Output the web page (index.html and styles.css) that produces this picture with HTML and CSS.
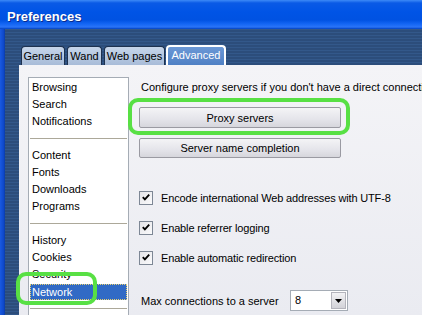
FILE: index.html
```html
<!DOCTYPE html>
<html lang="en">
<head>
    <meta charset="UTF-8">
    <meta name="viewport" content="width=device-width, initial-scale=1.0">
    <title>Preferences</title>
    <link rel="stylesheet" href="styles.css">
</head>
<body>
    <div class="window">
        <div class="titlebar">Preferences</div>
        <div class="frame">
            <div class="frame-edge"></div>
            <div class="frame-body">
                <div class="tabs">
                    <div class="tab tab-general">General</div>
                    <div class="tab tab-wand">Wand</div>
                    <div class="tab tab-web">Web pages</div>
                    <div class="tab active">Advanced</div>
                </div>
                <div class="panel">
                    <ul class="listbox">
                        <li>Browsing</li>
                        <li>Search</li>
                        <li>Notifications</li>
                        <li class="sep"></li>
                        <li>Content</li>
                        <li>Fonts</li>
                        <li>Downloads</li>
                        <li>Programs</li>
                        <li class="sep"></li>
                        <li>History</li>
                        <li>Cookies</li>
                        <li>Security</li>
                        <li class="selected">Network</li>
                        <li class="sep"></li>
                    </ul>
                    <div class="content">
                        <p class="intro">Configure proxy servers if you don't have a direct connection</p>
                        <button class="btn btn-proxy">Proxy servers</button>
                        <button class="btn">Server name completion</button>
                        <div class="checks">
                            <label class="check">
                                <span class="box">
                                    <svg width="13" height="13" viewBox="0 0 13 13"><path d="M3 6 L5.3 8.5 L10 3.5" fill="none" stroke="#000" stroke-width="2"/></svg>
                                </span>
                                Encode international Web addresses with UTF-8
                            </label>
                            <label class="check">
                                <span class="box">
                                    <svg width="13" height="13" viewBox="0 0 13 13"><path d="M3 6 L5.3 8.5 L10 3.5" fill="none" stroke="#000" stroke-width="2"/></svg>
                                </span>
                                Enable referrer logging
                            </label>
                            <label class="check">
                                <span class="box">
                                    <svg width="13" height="13" viewBox="0 0 13 13"><path d="M3 6 L5.3 8.5 L10 3.5" fill="none" stroke="#000" stroke-width="2"/></svg>
                                </span>
                                Enable automatic redirection
                            </label>
                        </div>
                        <div class="max-row">
                            <span class="max-label">Max connections to a server</span>
                            <div class="select">
                                <span class="select-value">8</span>
                                <span class="select-btn">
                                    <svg width="7" height="4" viewBox="0 0 7 4"><path d="M0 0 H7 L3.5 4 Z" fill="#000"/></svg>
                                </span>
                            </div>
                        </div>
                    </div>
                </div>
            </div>
        </div>
        <div class="highlight hl-proxy"></div>
        <div class="highlight hl-network"></div>
    </div>
</body>
</html>
```

FILE: styles.css
```css
* {
    margin: 0;
    padding: 0;
    box-sizing: border-box;
    font-family: 'Liberation Sans', Arial, sans-serif;
}

body {
    width: 422px;
    height: 315px;
    overflow: hidden;
    background: #2f5280;
}

.window {
    position: relative;
    width: 422px;
    height: 315px;
    display: flex;
    flex-direction: column;
    overflow: hidden;
}

.titlebar {
    flex-shrink: 0;
    height: 29px;
    padding: 9px 0 0 7px;
    line-height: 16px;
    font-size: 13px;
    font-weight: bold;
    color: #fff;
    text-shadow: 1px 1px 0 #0b2b8c;
    background: linear-gradient(#3d8af7 0, #0a5ae6 3px, #0054e6 12px, #0052e2 20px, #1466f4 24px, #2a74f8 27px, #0040c0 29px);
}

.frame {
    flex: 1;
    display: flex;
    min-height: 0;
}

.frame-edge {
    flex-shrink: 0;
    width: 5px;
    background: linear-gradient(90deg, #1a5ae0, #0c46c8 4px, #0a3a9c 5px);
}

.frame-body {
    flex: 1;
    min-width: 0;
    display: flex;
    flex-direction: column;
    padding-left: 14px;
    background: repeating-linear-gradient(#33588a 0, #33588a 1px, #2c4d7b 1px, #2c4d7b 3px);
}

.tabs {
    flex-shrink: 0;
    height: 36px;
    display: flex;
    align-items: flex-end;
    gap: 2px;
    padding-left: 2px;
}

.tab {
    height: 19px;
    line-height: 18px;
    text-align: center;
    white-space: nowrap;
    font-size: 11px;
    color: #000;
    background: linear-gradient(#c6d5ea, #a8bcd8);
    border: 1px solid #1e3250;
    border-bottom: none;
    border-radius: 4px 4px 0 0;
}

.tab-general {
    width: 44px;
}

.tab-wand {
    width: 35px;
}

.tab-web {
    width: 61px;
}

.tab.active {
    width: 60px;
    height: 20px;
    margin-left: -1px;
    color: #fff;
    background: linear-gradient(#6b98d6, #4f80c4);
    border: 2px solid #fff;
    border-bottom: none;
    line-height: 17px;
}

.panel {
    flex: 1;
    min-height: 0;
    display: flex;
    overflow: hidden;
    background: linear-gradient(#f4f4f7, #eaebf1);
}

.listbox {
    flex-shrink: 0;
    list-style: none;
    width: 101px;
    height: 250px;
    margin: 12px 0 0 9px;
    padding-top: 1px;
    background: #fff;
    border: 1px solid #a5acb5;
}

.listbox li {
    height: 17px;
    line-height: 17px;
    margin: 0 1px;
    padding-left: 2px;
    font-size: 11px;
    color: #000;
}

.listbox li.sep {
    position: relative;
}

.listbox li.sep::after {
    content: "";
    position: absolute;
    left: 0;
    right: 0;
    top: 8px;
    border-top: 1px solid #aca899;
}

.listbox li.selected {
    height: 16px;
    line-height: 14px;
    margin-top: 1px;
    padding-left: 1px;
    color: #fff;
    background: #316ac5;
    border: 1px dotted #e8d070;
}

.content {
    flex: 1;
    min-width: 0;
    padding: 15px 0 0 10px;
    white-space: nowrap;
}

.intro {
    padding-left: 2px;
    line-height: 14px;
    font-size: 11px;
    color: #000;
}

.btn {
    display: block;
    width: 202px;
    height: 20px;
    margin-top: 10px;
    font-size: 11px;
    color: #000;
    background: linear-gradient(#f4f4f6, #e4e4ea 60%, #d6d6dc);
    border: 1px solid #9a9aa2;
    border-radius: 2px;
}

.btn-proxy {
    height: 21px;
    margin-top: 13px;
}

.checks {
    margin-top: 31px;
    display: flex;
    flex-direction: column;
    gap: 13px;
}

.check {
    display: flex;
    align-items: center;
    gap: 8px;
    height: 17px;
    font-size: 11px;
    letter-spacing: -0.15px;
    color: #000;
}

.box {
    width: 14px;
    height: 14px;
    display: flex;
    align-items: center;
    justify-content: center;
    border: 1px solid #7d8795;
    background: linear-gradient(135deg, #e4e4e8, #fbfbfc);
}

.box svg {
    display: block;
}

.max-row {
    margin-top: 24px;
    display: flex;
    align-items: center;
    padding-left: 2px;
}

.max-label {
    width: 149px;
    font-size: 11px;
    color: #000;
}

.select {
    width: 58px;
    height: 21px;
    display: flex;
    justify-content: space-between;
    background: #fff;
    border: 1px solid #a5acb5;
}

.select-value {
    padding-left: 4px;
    line-height: 19px;
    font-size: 11px;
    color: #000;
}

.select-btn {
    width: 15px;
    margin: 1px;
    display: flex;
    align-items: center;
    justify-content: center;
    background: linear-gradient(#f2f2f4, #d2d2d8);
    border: 1px solid #b4b4bc;
}

.highlight {
    position: absolute;
    border: 4px solid #58e044;
    border-radius: 10px;
}

.hl-proxy {
    left: 128px;
    top: 98px;
    width: 222px;
    height: 37px;
}

.hl-network {
    left: 16px;
    top: 272px;
    width: 81px;
    height: 33px;
}
```
